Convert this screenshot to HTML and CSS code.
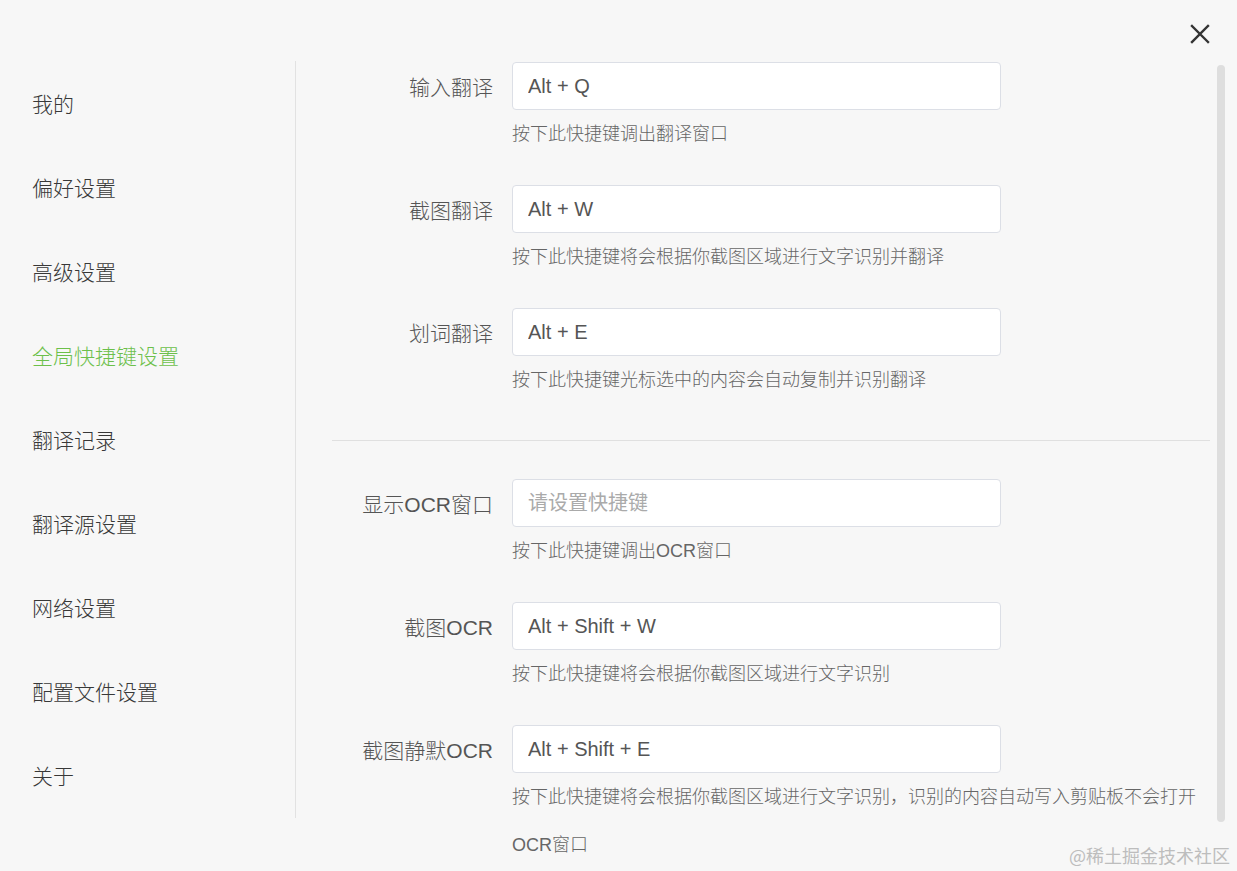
FILE: index.html
```html
<!DOCTYPE html>
<html lang="zh-CN">
<head>
<meta charset="utf-8">
<title>设置</title>
<link rel="stylesheet" href="styles.css">
</head>
<body>
<div class="app">
  <nav class="sidebar">
    <div class="nav-item">我的</div>
    <div class="nav-item">偏好设置</div>
    <div class="nav-item">高级设置</div>
    <div class="nav-item active">全局快捷键设置</div>
    <div class="nav-item">翻译记录</div>
    <div class="nav-item">翻译源设置</div>
    <div class="nav-item">网络设置</div>
    <div class="nav-item">配置文件设置</div>
    <div class="nav-item">关于</div>
  </nav>
  <main class="content">
    <section class="group">
      <div class="row">
        <label class="label">输入翻译</label>
        <div class="field">
          <input class="input" type="text" value="Alt + Q">
          <p class="hint"><span>按下此快捷键调出翻译窗口</span></p>
        </div>
      </div>
      <div class="row">
        <label class="label">截图翻译</label>
        <div class="field">
          <input class="input" type="text" value="Alt + W">
          <p class="hint"><span>按下此快捷键将会根据你截图区域进行文字识别并翻译</span></p>
        </div>
      </div>
      <div class="row">
        <label class="label">划词翻译</label>
        <div class="field">
          <input class="input" type="text" value="Alt + E">
          <p class="hint"><span>按下此快捷键光标选中的内容会自动复制并识别翻译</span></p>
        </div>
      </div>
    </section>
    <hr class="divider">
    <section class="group">
      <div class="row">
        <label class="label">显示OCR窗口</label>
        <div class="field">
          <input class="input" type="text" placeholder="请设置快捷键">
          <p class="hint"><span>按下此快捷键调出OCR窗口</span></p>
        </div>
      </div>
      <div class="row">
        <label class="label">截图OCR</label>
        <div class="field">
          <input class="input" type="text" value="Alt + Shift + W">
          <p class="hint"><span>按下此快捷键将会根据你截图区域进行文字识别</span></p>
        </div>
      </div>
      <div class="row">
        <label class="label">截图静默OCR</label>
        <div class="field">
          <input class="input" type="text" value="Alt + Shift + E">
          <p class="hint"><span>按下此快捷键将会根据你截图区域进行文字识别，识别的内容自动写入剪贴板不会打开</span><span>OCR窗口</span></p>
        </div>
      </div>
    </section>
  </main>
</div>
<div class="scroll-thumb"></div>
<button class="close" aria-label="关闭">
  <svg width="20" height="20" viewBox="0 0 20 20"><path d="M2 2 L18 18 M18 2 L2 18" stroke="#333" stroke-width="2.4" stroke-linecap="square" fill="none"/></svg>
</button>
<div class="watermark">@稀土掘金技术社区</div>
</body>
</html>
```

FILE: styles.css
```css
html, body {
  margin: 0;
  padding: 0;
  height: 100%;
  overflow: hidden;
}
body {
  background: #f7f7f7;
  font-family: "Liberation Sans", "Noto Sans CJK SC", sans-serif;
  color: #333;
  position: relative;
}
.app {
  display: flex;
  align-items: flex-start;
}
.sidebar {
  width: 295px;
  margin-top: 61px;
  height: 757px;
  border-right: 1px solid #e2e2e2;
  display: flex;
  flex-direction: column;
  flex-shrink: 0;
}
.nav-item {
  height: 81px;
  line-height: 81px;
  padding-top: 3px;
  padding-left: 32px;
  font-size: 21px;
  font-weight: 300;
  color: #383838;
}
.nav-item.active {
  color: #6cc04a;
}
.content {
  padding: 62px 27px 0 36px;
  width: 878px;
}
.group {
  display: flex;
  flex-direction: column;
  gap: 27px;
}
.row {
  display: flex;
  align-items: flex-start;
}
.label {
  width: 161px;
  margin-right: 19px;
  padding-top: 2px;
  text-align: right;
  font-size: 21px;
  font-weight: 300;
  line-height: 48px;
  color: #555;
  flex-shrink: 0;
}
.field {
  flex: 1;
  display: flex;
  flex-direction: column;
}
.input {
  box-sizing: border-box;
  width: 489px;
  height: 48px;
  border: 1px solid #dcdfe6;
  border-radius: 4px;
  background: #fff;
  padding: 0 15px;
  font-family: "Liberation Sans", "Noto Sans CJK SC", sans-serif;
  font-size: 20px;
  color: #555;
  outline: none;
}
.input::placeholder {
  color: #aaa;
}
.hint {
  margin: 0;
  font-size: 18px;
  font-weight: 300;
  line-height: 48px;
  color: #666;
}
.divider {
  border: 0;
  border-top: 1px solid #e0e0e0;
  margin: 36px 0 38px 0;
  width: 878px;
}
.scroll-thumb {
  position: absolute;
  left: 1217px;
  top: 65px;
  width: 8px;
  height: 757px;
  background: #dedede;
  border-radius: 4px;
}
.close {
  position: absolute;
  top: 24px;
  left: 1190px;
  width: 20px;
  height: 20px;
  padding: 0;
  border: 0;
  background: transparent;
  cursor: pointer;
}
.close svg {
  display: block;
}
.watermark {
  position: absolute;
  right: 7px;
  bottom: 4px;
  font-size: 18px;
  line-height: 24px;
  color: #bdbdbd;
  font-family: "Noto Sans CJK SC", sans-serif;
}
```
